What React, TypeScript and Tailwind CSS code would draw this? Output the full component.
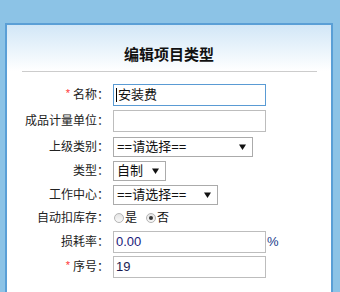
import React from "react";

const font = { fontFamily: '"Liberation Sans", "Noto Sans CJK SC", sans-serif' };

function Arrow() {
  return (
    <svg width="7" height="6" viewBox="0 0 7 6" className="shrink-0">
      <path d="M0 0.5 H7 L3.5 6 Z" fill="#111" />
    </svg>
  );
}

function Label({ text, required }: { text: string; required?: boolean }) {
  return (
    <div className="w-[102px] shrink-0 text-right text-[12px] text-[#222] leading-none">
      {required && <span className="text-[11px] text-[#f33] relative top-[-2px] mr-[3px]">*</span>}
      {text}：
    </div>
  );
}

function Row({ h, children }: { h: string; children: React.ReactNode }) {
  return <div className={`flex items-center ${h}`}>{children}</div>;
}

function Select({ w, value }: { w: string; value: string }) {
  return (
    <div
      className={`${w} h-[20px] ml-[4px] border border-[#ababab] bg-white flex items-center justify-between pl-[3px] pr-[6px] text-[13px] text-[#111]`}
    >
      <span>{value}</span>
      <Arrow />
    </div>
  );
}

function Radio({ checked }: { checked?: boolean }) {
  return (
    <span className="w-[10px] h-[10px] rounded-full border border-[#b4b4b4] bg-gradient-to-b from-[#e4e4e4] to-[#f8f8f8] flex items-center justify-center">
      {checked && <span className="w-[4px] h-[4px] rounded-full bg-[#333]" />}
    </span>
  );
}

export default function App() {
  return (
    <div className="w-[340px] h-[292px] overflow-hidden bg-[#8cc3e6] pt-[23px] pl-[5px]" style={font}>
      <div className="w-[328px] h-[300px] border-2 border-[#5a9fd6] bg-[linear-gradient(to_bottom,#d2e7f7,#ffffff_46px)]">
        <div className="pt-[20px] h-[40px] text-center text-[15px] font-bold leading-[20px] text-[#111]">
          编辑项目类型
        </div>
        <div className="mt-[6px] ml-[15px] w-[295px] h-px bg-[#cccccc]" />
        <div className="mt-[10px] flex flex-col">
          <Row h="h-[26px]">
            <Label text="名称" required />
            <div className="ml-[4px] w-[153px] h-[22px] border border-[#5a9bd4] bg-white flex items-center pl-[2px] text-[13px] text-[#111]">
              <span className="w-px h-[14px] bg-black mr-[1px]" />
              安装费
            </div>
          </Row>
          <Row h="h-[26px]">
            <Label text="成品计量单位" />
            <div className="ml-[4px] w-[153px] h-[22px] border border-[#bdbdbd] bg-white" />
          </Row>
          <Row h="h-[25px]">
            <Label text="上级类别" />
            <Select w="w-[140px]" value="==请选择==" />
          </Row>
          <Row h="h-[24px]">
            <Label text="类型" />
            <Select w="w-[53px]" value="自制" />
          </Row>
          <Row h="h-[23px]">
            <Label text="工作中心" />
            <Select w="w-[105px]" value="==请选择==" />
          </Row>
          <Row h="h-[24px]">
            <Label text="自动扣库存" />
            <div className="ml-[5px] flex items-center text-[12px] text-[#111]">
              <Radio />
              <span className="ml-[1px]">是</span>
              <span className="ml-[9px]" />
              <Radio checked />
              <span className="ml-[1px]">否</span>
            </div>
          </Row>
          <Row h="h-[23px]">
            <Label text="损耗率" />
            <div className="ml-[4px] w-[153px] h-[22px] border border-[#bdbdbd] bg-white flex items-center pl-[2px] text-[13px] text-[#1a1a7a]">
              0.00
            </div>
            <span className="ml-[1px] text-[13px] text-[#1a3a8a]">%</span>
          </Row>
          <Row h="h-[28px]">
            <Label text="序号" required />
            <div className="ml-[4px] w-[153px] h-[22px] border border-[#bdbdbd] bg-white flex items-center pl-[2px] text-[13px] text-[#1a1a50]">
              19
            </div>
          </Row>
        </div>
      </div>
    </div>
  );
}
